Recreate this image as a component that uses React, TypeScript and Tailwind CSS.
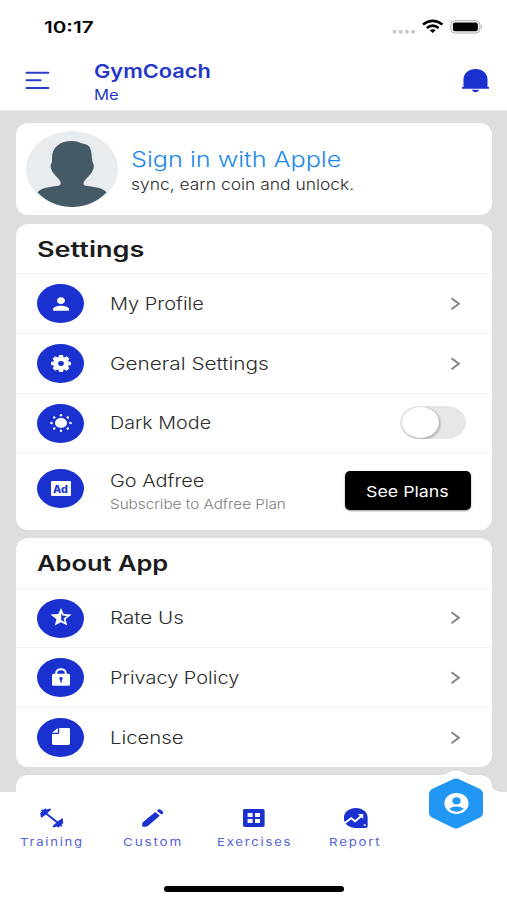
import { useLayoutEffect, useRef, type ReactNode } from "react";
import { MdAccountCircle, MdPerson } from "react-icons/md";

/** A single line of text that widens to fill exactly `w` pixels. */
function Wide({ w, className = "", children }: { w: number; className?: string; children: string }) {
  const ref = useRef<HTMLSpanElement>(null);
  useLayoutEffect(() => {
    const el = ref.current;
    if (el) el.style.transform = `scaleX(${w / el.offsetWidth})`;
  }, [w]);
  return (
    <span className={`block whitespace-nowrap ${className}`} style={{ width: w }}>
      <span ref={ref} className="inline-block origin-left">{children}</span>
    </span>
  );
}

function Badge({ children }: { children: ReactNode }) {
  return (
    <span className="flex h-[39px] w-[47px] shrink-0 items-center justify-center rounded-[50%] bg-[#1a31d0] text-white">
      {children}
    </span>
  );
}

function Row({ icon, label, w, h, children }: { icon: ReactNode; label: string; w: number; h: string; children?: ReactNode }) {
  return (
    <div className={`flex items-center border-t border-[#f3f3f3] pl-[21px] pr-[26px] ${h}`}>
      <Badge>{icon}</Badge>
      <Wide w={w} className="ml-[26px] text-[17px] leading-6 font-light text-[#2c2c2c]">{label}</Wide>
      <span className="ml-auto">{children ?? <Chevron />}</span>
    </div>
  );
}

const Chevron = () => (
  <svg width="18" height="16" viewBox="0 0 18 16" fill="none" stroke="#858585" strokeWidth="2">
    <path d="M3.500 2.2 10.800 7.7 3.500 13.2" />
  </svg>
);

const Gear = () => (
  <svg width="20" height="17" viewBox="-10 -10 20 20" preserveAspectRatio="none">
    <g fill="currentColor">
      <circle r="7" />
      <path d="M-1.900-10H1.900L3-6H-3ZM-1.900 10H1.900L3 6H-3ZM-10-1.900V1.900L-6 3V-3ZM10-1.900V1.900L6 3V-3Z" />
      <path d="M-1.900-10H1.900L3-6H-3ZM-1.900 10H1.900L3 6H-3ZM-10-1.900V1.900L-6 3V-3ZM10-1.900V1.900L6 3V-3Z" transform="rotate(45)" />
    </g>
    <circle r="2.900" fill="#1a31d0" />
  </svg>
);

const Sun = () => (
  <svg width="22" height="18" viewBox="0 0 22 18" preserveAspectRatio="none" fill="currentColor">
    <ellipse cx="11" cy="9" rx="6" ry="5" />
    <circle cx="11" cy="1.2" r="1.2" />
    <circle cx="11" cy="16.8" r="1.2" />
    <circle cx="1.5" cy="9" r="1.3" />
    <circle cx="20.5" cy="9" r="1.3" />
    <circle cx="4.2" cy="3.5" r="1.2" />
    <circle cx="17.8" cy="3.5" r="1.2" />
    <circle cx="4.2" cy="14.5" r="1.2" />
    <circle cx="17.8" cy="14.5" r="1.2" />
  </svg>
);

const Star = () => (
  <svg className="-translate-y-px" width="22" height="18" viewBox="0 0 22 18" fill="currentColor">
    <path fillRule="evenodd" d="M11 0 13.7 5.9 21.5 6.6 15.5 11.2 17.3 17.6 11 14.2 4.7 17.6 6.5 11.2.5 6.6 8.3 5.9ZM11.200 5V12.200L14.700 14 13.500 10.500 17 8 12.500 7.600Z" />
  </svg>
);

const Lock = () => (
  <svg className="-translate-y-px" width="18" height="18" viewBox="0 0 18 18">
    <path d="M4.2 7V5.2C4.2 2.9 6.2 1.2 9 1.2s4.8 1.7 4.8 4V7" fill="none" stroke="currentColor" strokeWidth="2" />
    <rect y="5.8" width="18" height="12" rx="1.5" fill="currentColor" />
    <path d="M9 9.1a1.8 1.6 0 0 1 .8 3V14.6H8.2V12.1a1.8 1.6 0 0 1 .8-3Z" fill="#1a31d0" />
  </svg>
);

const Note = () => (
  <svg className="-translate-y-px" width="18" height="17" viewBox="0 0 18 17" fill="currentColor">
    <path d="M7.2 0H16.5Q18 0 18 1.4V15.6Q18 17 16.5 17H1.5Q0 17 0 15.6V6H5.8Q7.2 6 7.2 4.7Z" />
    <path d="M5.8 0V4.8H0Z" />
  </svg>
);

const AdIcon = () => (
  <span className="flex h-[15px] w-5 items-center justify-center rounded-[1px] bg-white text-[10px] leading-none font-extrabold text-[#1a31d0]">
    <Wide w={15}>Ad</Wide>
  </span>
);

const Dumbbell = () => (
  <svg width="24" height="20" viewBox="0 0 24 20" fill="currentColor" stroke="currentColor" strokeLinejoin="round">
    <path d="M5 4.500 19 15.500" strokeWidth="2" />
    <path d="M1 4.800 2.800 4 1.800 2 4.500 2.200 5.300.800 7 2 10.800 1 9.800 2.800 4.600 7.200 1.500 9.300Z" strokeWidth="1" />
    <path d="M23 15.200 21.200 16 22.200 18 19.500 17.800 18.700 19.200 17 18 13.200 19 14.200 17.200 19.400 12.800 22.500 10.700Z" strokeWidth="1" />
  </svg>
);

const Pencil = () => (
  <svg width="22" height="18" viewBox="0 0 22 18" fill="currentColor">
    <path d="M13.5 2.9 18 6.7 6.3 16.7Q5.200 17.800 3.600 17.800H1.5Q.4 17.800.4 16.700V14.9Q.4 13.800 1.300 13Z" />
    <path d="M15 1.700 16.500.6Q17.800-.2 19 .7L21 2.400Q22.100 3.400 21 4.400L19.500 5.600Z" />
  </svg>
);

const Grid = () => (
  <svg width="22" height="18" viewBox="0 0 22 18">
    <rect width="22" height="18" rx="2" fill="currentColor" />
    <path d="M4.8 4H9.8V8H4.8ZM12.2 4H17.2V8H12.2ZM4.8 10H9.8V14H4.8ZM12.2 10H17.2V14H12.2Z" fill="white" />
  </svg>
);

const Report = () => (
  <svg width="24" height="20" viewBox="0 0 24 20">
    <path d="M12 0C18.7 0 24 4.3 24 10V18.300Q24 20 22 20H12C5.3 20 0 15.7 0 10S5.3 0 12 0Z" fill="currentColor" />
    <path d="M1 15 7.4 10.2 11.4 13.2 17.2 8.2" fill="none" stroke="white" strokeWidth="2" />
    <path d="M14 6H19.4V11ZM20 16.2H21.8V18H20Z" fill="white" />
  </svg>
);

const tabs = [
  { label: "Training", w: 64, icon: <Dumbbell /> },
  { label: "Custom", w: 60, icon: <Pencil /> },
  { label: "Exercises", w: 75, icon: <Grid /> },
  { label: "Report", w: 53, icon: <Report /> },
];

function Toggle() {
  return (
    <span className="flex h-[33px] w-[66px] -translate-y-px items-center overflow-hidden bg-[#e7e7e7] pl-[2px] [border-radius:20px/17px]">
      <span className="h-[31px] w-[37px] rounded-[50%] bg-white shadow-[1px_1px_3px_rgba(0,0,0,0.35)]" />
    </span>
  );
}

export default function App() {
  return (
    <div className="relative flex h-[900px] w-[507px] flex-col overflow-hidden bg-[#dedede] font-['Inter','Liberation_Sans',sans-serif]">
      <header className="h-[111px] shrink-0 border-b border-[#e9e9e9] bg-white">
        <div className="flex h-[54px] items-center pl-[44px] pr-[24px]">
          <Wide w={49} className="text-[16px] font-semibold text-black">10:17</Wide>
          <svg className="ml-auto" width="92" height="16" viewBox="0 0 92 16">
            <g fill="#c6c6c6">
              <circle cx="3.5" cy="12.7" r="2" />
              <circle cx="9.7" cy="12.7" r="2" />
              <circle cx="15.9" cy="12.7" r="2" />
              <circle cx="22.1" cy="12.7" r="2" />
            </g>
            <g fill="none" stroke="black" strokeWidth="2.5">
              <path d="M32 5.5Q41.7-1.8 51.4 5.5" />
              <path d="M35.8 9Q41.7 4.2 47.6 9" />
            </g>
            <path d="M38.7 11.3Q41.7 9 44.7 11.3L41.7 14Z" />
            <rect x="59.9" y="1.7" width="29" height="12.3" rx="4" fill="white" stroke="#aaa" />
            <rect x="61.9" y="3.4" width="25" height="8.9" rx="2" />
            <path d="M90 6.2Q92 7.8 90 9.4Z" fill="#999" />
          </svg>
        </div>
        <div className="flex h-[56px] items-start pl-[24px] pr-[18px]">
          <svg className="mt-[17px]" width="26" height="19" viewBox="0 0 26 19" stroke="#263bc9" strokeWidth="2" strokeLinecap="round">
            <path d="M2.500 1.8H24.300M2.500 9.3H16.500M2.500 16.9H24.300" />
          </svg>
          <div className="ml-[44px] pt-[5px] text-[#2437c9]">
            <Wide w={117} className="text-[19px] leading-[25px] font-semibold">GymCoach</Wide>
            <Wide w={25} className="text-[14px] leading-[22px]">Me</Wide>
          </div>
          <svg className="mt-[15px] ml-auto" width="27" height="24" viewBox="0 0 27 24" fill="#1a31d0">
            <path d="M1.5 18V10.5C1.5 4.5 6.5 0 13.5 0S25.5 4.5 25.5 10.5V18H27V19.7H0V18ZM10 20.7H17C16.5 22.2 15.3 23 13.5 23S10.5 22.2 10 20.7Z" />
          </svg>
        </div>
      </header>

      <main className="flex flex-1 flex-col pt-[12px] pl-[16px] pr-[15.500px]">
        <section className="flex h-[92px] shrink-0 items-center rounded-[12px] bg-white pl-[10px]">
          <svg width="92" height="76" viewBox="0 0 92 76">
            <ellipse cx="46" cy="38" rx="46" ry="38" fill="#e9ecef" />
            <path d="M46 10C51 10 54 12 57.500 12.800C63 13.500 65 17 65.500 23L66.500 31C68.500 33 68 38 66.500 40C64 45 61 46 58.500 50C56.500 53 57.500 54.500 61 55C68 56 77 56.500 80.500 61.500Q66 76 46 76T11.500 61.500C15 56.500 24 56 31 55C34.500 54.500 35.500 53 34 50C31.500 46 28 44 25.500 39C24 36 24.500 33 26 31L26 27C26 16 34 10 46 10Z" fill="#455a64" />
          </svg>
          <div className="ml-[12.500px] pt-[5px]">
            <Wide w={210} className="text-[21px] leading-[26px] font-light text-[#1d8aea]">Sign in with Apple</Wide>
            <Wide w={223} className="text-[15px] leading-[23px] font-light text-[#2c2c2c]">sync, earn coin and unlock.</Wide>
          </div>
        </section>

        <section className="mt-[9px] h-[306px] shrink-0 rounded-[12px] bg-white">
          <div className="flex h-[49px] items-center pt-[2px] pl-[21px]">
            <Wide w={107} className="text-[21px] font-semibold text-[#1c1c1c]">Settings</Wide>
          </div>
          <Row h="h-[60px]" icon={<MdPerson className="h-5 w-6" preserveAspectRatio="none" />} label="My Profile" w={94} />
          <Row h="h-[60px]" icon={<Gear />} label="General Settings" w={159} />
          <Row h="h-[59px]" icon={<Sun />} label="Dark Mode" w={101}><Toggle /></Row>
          <div className="flex h-[78px] items-start border-t border-[#f3f3f3] pt-[16px] pl-[21px] pr-[21px]">
            <Badge><AdIcon /></Badge>
            <div className="ml-[26px]">
              <Wide w={95} className="text-[17px] leading-6 font-light text-[#2c2c2c]">Go Adfree</Wide>
              <Wide w={176} className="text-[13px] leading-[22px] font-light text-[#7c7c7c]">Subscribe to Adfree Plan</Wide>
            </div>
            <button className="mt-[2px] ml-auto flex h-[39px] w-[126px] items-center justify-center rounded-[5px] bg-black pt-[3px] pr-px text-white shadow-[0_1px_2px_rgba(0,0,0,0.4)]">
              <Wide w={83} className="text-left text-[15px]">See Plans</Wide>
            </button>
          </div>
        </section>

        <section className="mt-[8px] h-[229px] shrink-0 rounded-[12px] bg-white">
          <div className="flex h-[50px] items-center pt-[2px] pl-[21px]">
            <Wide w={131} className="text-[21px] font-semibold text-[#1c1c1c]">About App</Wide>
          </div>
          <Row h="h-[59px]" icon={<Star />} label="Rate Us" w={74} />
          <Row h="h-[60px]" icon={<Lock />} label="Privacy Policy" w={129} />
          <Row h="h-[60px]" icon={<Note />} label="License" w={74} />
        </section>

        <section className="mt-[8px] h-[40px] shrink-0 rounded-t-[12px] bg-white" />
      </main>

      <nav className="absolute inset-x-0 bottom-0 h-[108px] bg-white text-[#1a31d0]">
        <svg className="absolute right-0 bottom-[107px]" width="98" height="24" viewBox="0 0 98 24">
          <path d="M0 24C13 22 11 17 20 12Q29 8 40 3.500Q47-.5 54 3.500L66 9C72 10 76 12 80 16C85 22 90 23 98 24Z" fill="white" />
        </svg>
        <div className="flex pt-[15px]">
          {tabs.map((t) => (
            <div key={t.label} className="flex w-[101.300px] flex-col items-center">
              <span className="flex h-[21px] translate-x-[0.800px] items-center">{t.icon}</span>
              <Wide w={t.w} className="mt-[5px] ml-[2px] text-[11px] leading-[18px] tracking-[1.500px] text-[#5563d6]">{t.label}</Wide>
            </div>
          ))}
        </div>
        <div className="absolute right-[23px] bottom-[71px] flex h-[51px] w-[56px] items-center justify-center">
          <svg className="absolute inset-0" width="56" height="51" viewBox="0 0 56 51">
            <path d="M24.500 1.500Q28-.5 31.500 1.500L51 10.500Q55 12.500 55 16V35Q55 38 51 40L31.500 49.500Q28 51.500 24.500 49.500L5 40Q1 38 1 35V16Q1 12.500 5 10.500Z" fill="#2196f3" />
          </svg>
          <MdAccountCircle className="relative h-[25px] w-[29px] text-white" preserveAspectRatio="none" />
        </div>
        <div className="absolute bottom-[8px] left-[164px] h-[6px] w-[180px] rounded-full bg-black" />
      </nav>
    </div>
  );
}
